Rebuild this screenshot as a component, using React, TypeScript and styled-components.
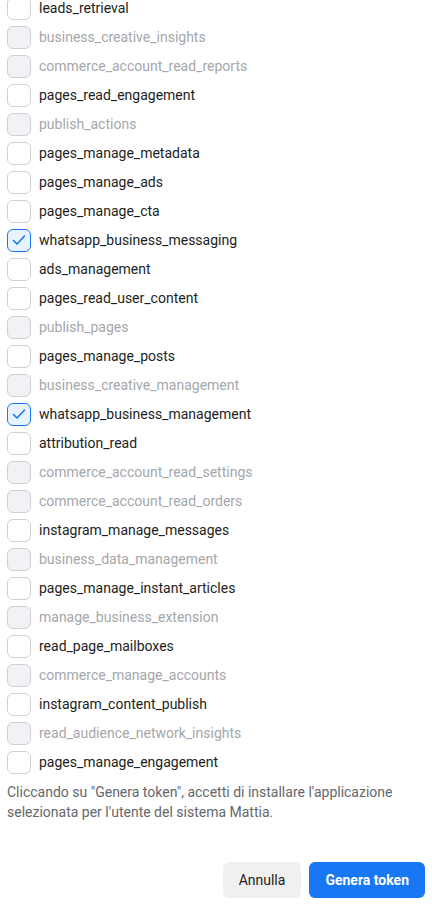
import React from "react";
import styled, { createGlobalStyle } from "styled-components";

const GlobalStyle = createGlobalStyle`
  html, body {
    margin: 0;
    padding: 0;
    background: #ffffff;
  }
  body {
    font-family: Roboto, "Liberation Sans", Arial, sans-serif;
    -webkit-font-smoothing: antialiased;
  }
`;

const Page = styled.div`
  padding: 0 7px 10px 7px;
  overflow: hidden;
`;

const List = styled.div`
  margin-top: -6.5px;
  display: flex;
  flex-direction: column;
`;

const Row = styled.label`
  display: flex;
  align-items: center;
  gap: 8px;
  height: 29px;
`;

type BoxProps = { $disabled: boolean; $checked: boolean };

const Box = styled.span<BoxProps>`
  box-sizing: border-box;
  width: 24px;
  height: 23px;
  flex-shrink: 0;
  border-radius: 6px;
  border: 1px solid
    ${(p) => (p.$checked && !p.$disabled ? "#1877f2" : "#ced0d4")};
  background: ${(p) =>
    p.$disabled ? "#f0f2f5" : p.$checked ? "#e7f3ff" : "#ffffff"};
  display: flex;
  align-items: center;
  justify-content: center;
`;

const Label = styled.span<{ $disabled: boolean }>`
  font-size: 14px;
  color: ${(p) => (p.$disabled ? "#a4a7ab" : "#1c1e21")};
  white-space: nowrap;
`;

const Note = styled.p`
  margin: 5px 0 0 0;
  font-size: 14px;
  line-height: 20px;
  color: #65676b;
`;

const Footer = styled.div`
  display: flex;
  justify-content: flex-end;
  gap: 8px;
  margin-top: 40px;
`;

const Button = styled.button<{ $primary?: boolean }>`
  height: 36px;
  border: none;
  border-radius: 6px;
  padding: 0 16px;
  font-family: Roboto, "Liberation Sans", Arial, sans-serif;
  font-size: 14px;
  font-weight: ${(p) => (p.$primary ? 700 : 400)};
  background: ${(p) => (p.$primary ? "#1877f2" : "#f0f0f0")};
  color: ${(p) => (p.$primary ? "#ffffff" : "#1c1e21")};
`;

type Permission = { name: string; disabled?: boolean; checked?: boolean };

const permissions: Permission[] = [
  { name: "leads_retrieval" },
  { name: "business_creative_insights", disabled: true },
  { name: "commerce_account_read_reports", disabled: true },
  { name: "pages_read_engagement" },
  { name: "publish_actions", disabled: true },
  { name: "pages_manage_metadata" },
  { name: "pages_manage_ads" },
  { name: "pages_manage_cta" },
  { name: "whatsapp_business_messaging", checked: true },
  { name: "ads_management" },
  { name: "pages_read_user_content" },
  { name: "publish_pages", disabled: true },
  { name: "pages_manage_posts" },
  { name: "business_creative_management", disabled: true },
  { name: "whatsapp_business_management", checked: true, disabled: true },
  { name: "attribution_read" },
  { name: "commerce_account_read_settings", disabled: true },
  { name: "commerce_account_read_orders", disabled: true },
  { name: "instagram_manage_messages" },
  { name: "business_data_management", disabled: true },
  { name: "pages_manage_instant_articles" },
  { name: "manage_business_extension", disabled: true },
  { name: "read_page_mailboxes" },
  { name: "commerce_manage_accounts", disabled: true },
  { name: "instagram_content_publish" },
  { name: "read_audience_network_insights", disabled: true },
  { name: "pages_manage_engagement" },
];

const Check = () => (
  <svg width="16" height="16" viewBox="0 0 16 16" fill="none">
    <path
      d="M2.5 8.5 L6 12 L13.5 4"
      stroke="#1877f2"
      strokeWidth="1.6"
      strokeLinecap="round"
      strokeLinejoin="round"
    />
  </svg>
);

const PermissionRow = ({ name, disabled = false, checked = false }: Permission) => {
  const lockedChecked = checked && disabled;
  return (
    <Row>
      <Box $disabled={disabled && !lockedChecked} $checked={checked}>
        {checked && <Check />}
      </Box>
      <Label $disabled={disabled && !lockedChecked}>{name}</Label>
    </Row>
  );
};

const App = () => {
  return (
    <Page>
      <GlobalStyle />
      <List>
        {permissions.map((p) => (
          <PermissionRow key={p.name} {...p} />
        ))}
      </List>
      <Note>
        Cliccando su "Genera token", accetti di installare l'applicazione
        selezionata per l'utente del sistema Mattia.
      </Note>
      <Footer>
        <Button>Annulla</Button>
        <Button $primary>Genera token</Button>
      </Footer>
    </Page>
  );
};

export default App;
